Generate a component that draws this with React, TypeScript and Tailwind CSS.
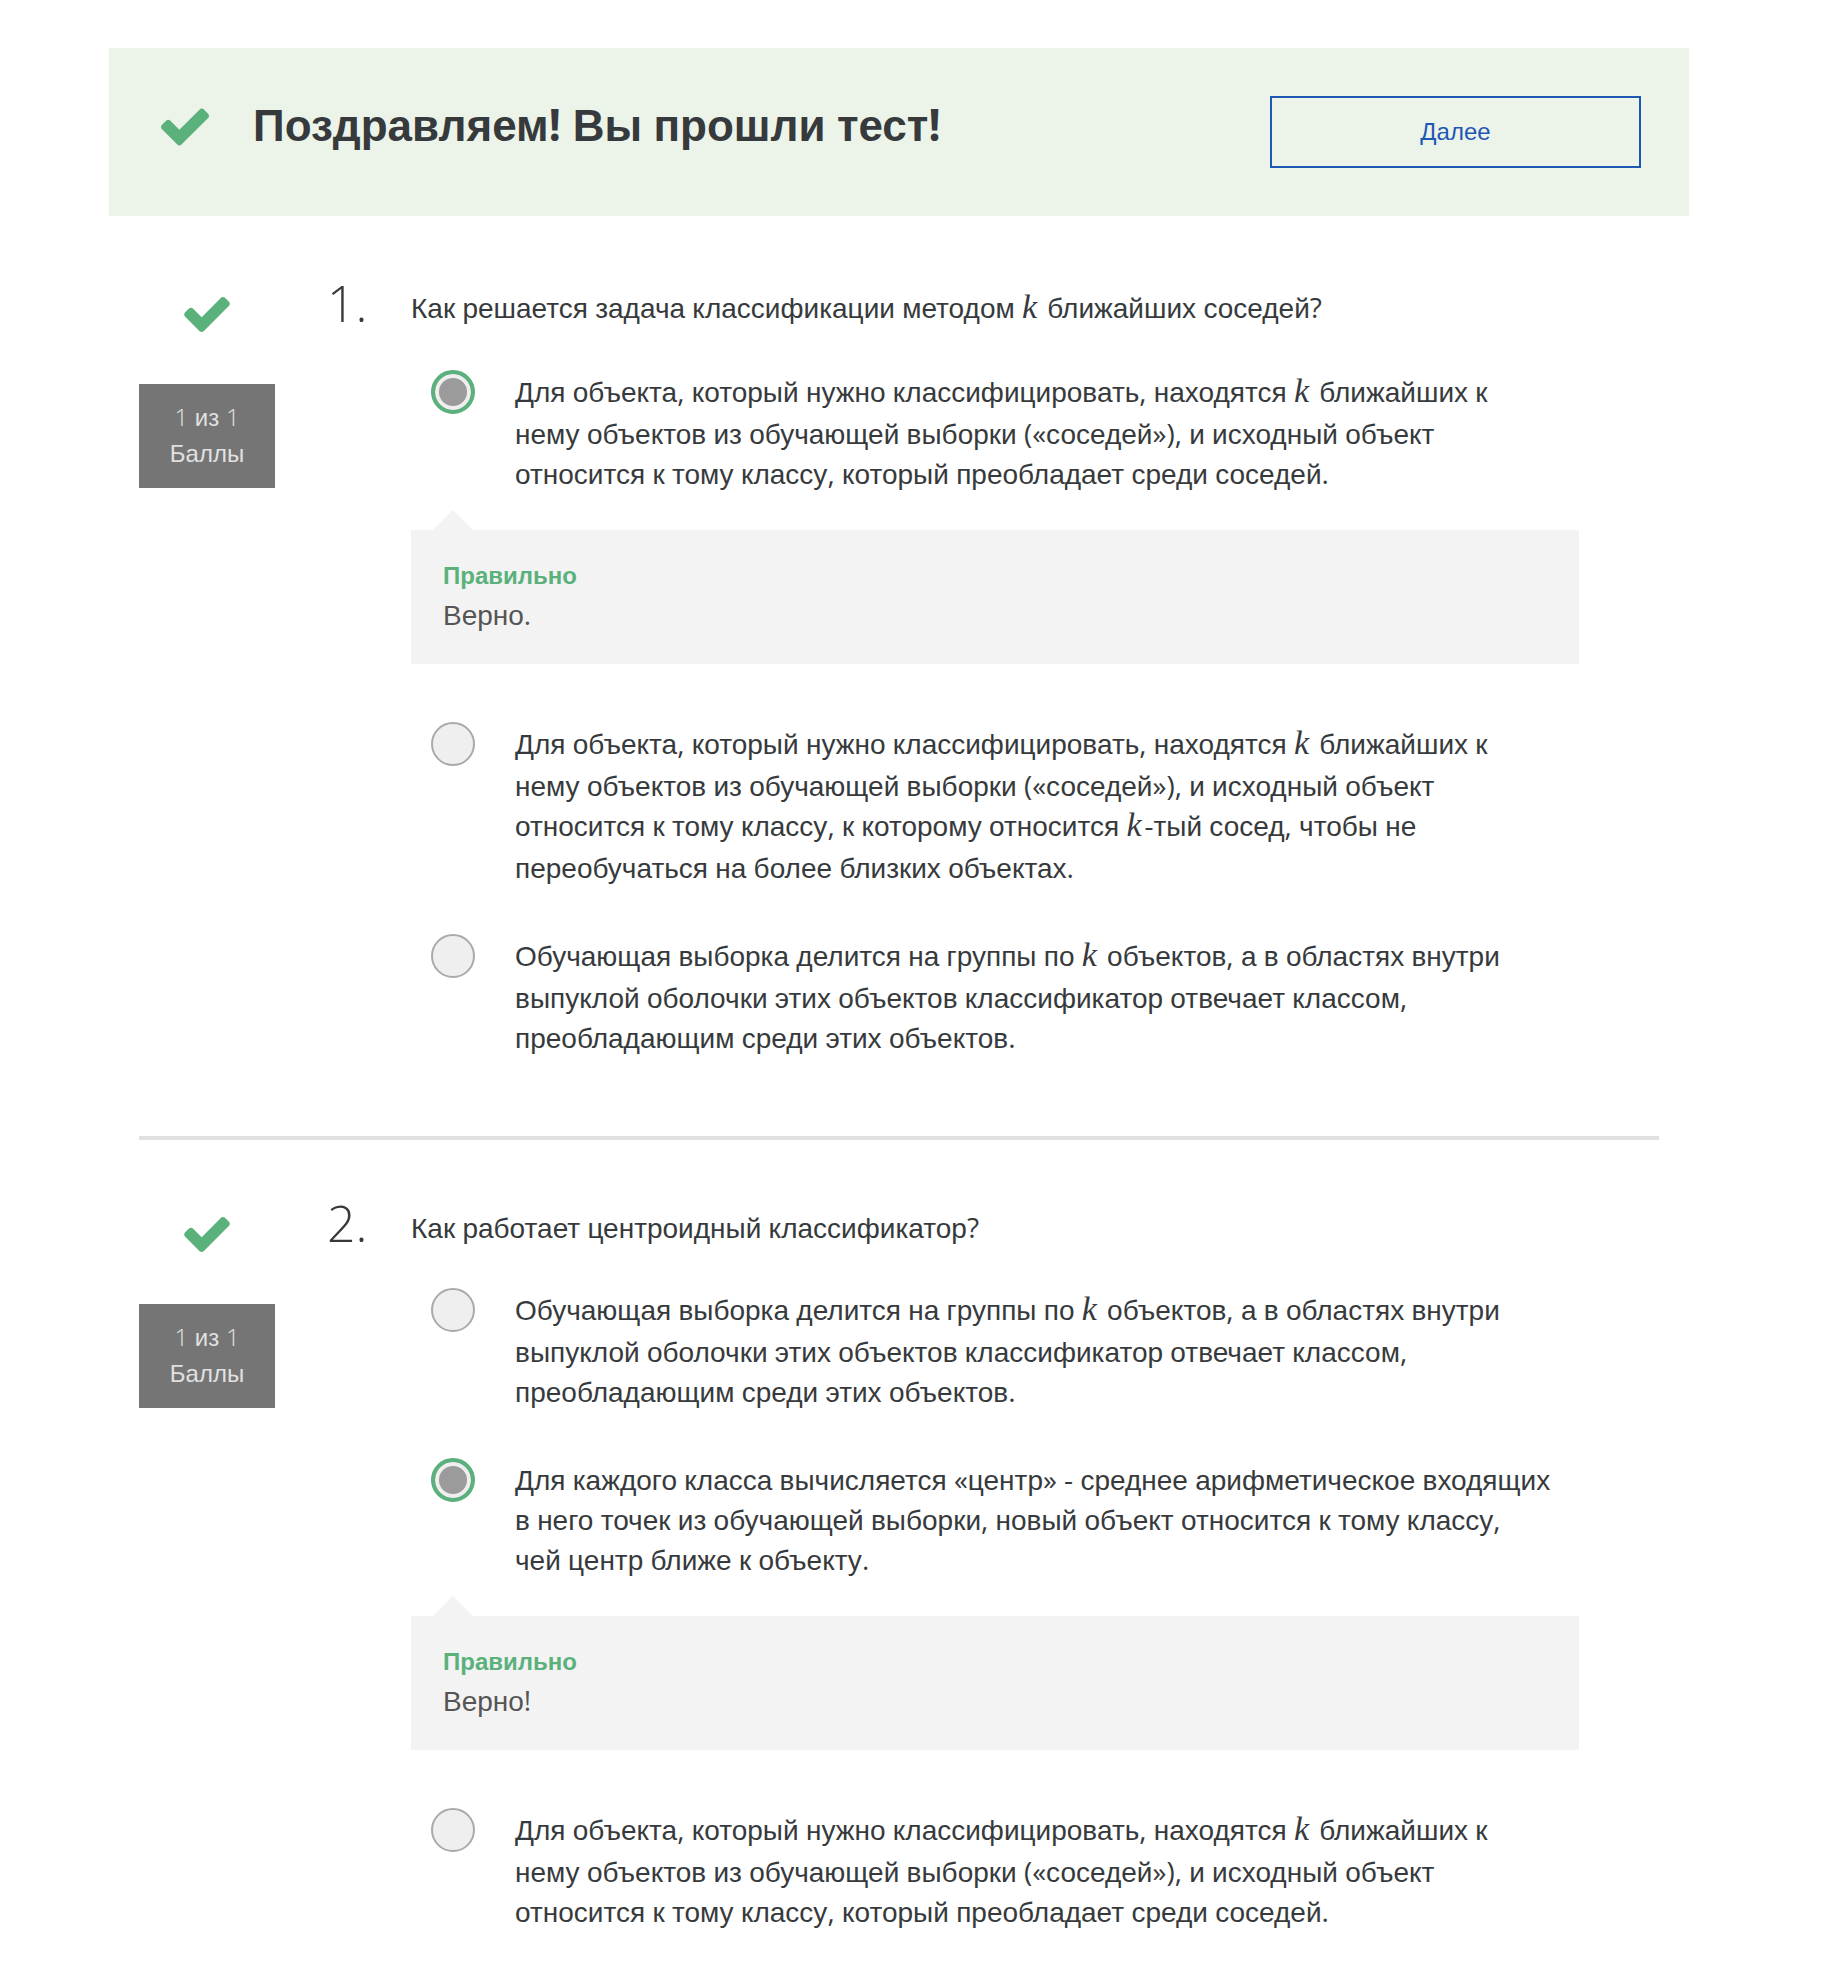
import { Fragment, type ReactNode } from "react";

const CYRILLIC = /([\u0400-\u04FF]+)/;

/** Open Sans for digits, spaces and punctuation; Liberation Sans for Cyrillic words. */
function Mixed({ children }: { children: string }) {
  return (
    <>
      {children.split(CYRILLIC).map((part, i) =>
        CYRILLIC.test(part) || part === "" ? (
          <Fragment key={i}>{part}</Fragment>
        ) : (
          <span key={i} className="font-['Open_Sans',sans-serif] leading-none">
            {part}
          </span>
        ),
      )}
    </>
  );
}

/** Text in which a $ stands for the variable k. */
function MathText({ children }: { children: string }) {
  return (
    <>
      {children.split("$").map((part, i) => (
        <Fragment key={i}>
          {i > 0 && (
            <i className="inline-block w-[18px] pb-[7px] font-['Liberation_Serif',serif] text-[34px] leading-[34px]">
              k
            </i>
          )}
          <Mixed>{part}</Mixed>
        </Fragment>
      ))}
    </>
  );
}

function Check({ className }: { className: string }) {
  return (
    <svg viewBox="121 334 1550 1188" className={className} fill="#5bb17b" aria-hidden="true">
      <path d="M1671 566q0 40-28 68l-724 724-136 136q-28 28-68 28t-68-28l-136-136-362-362q-28-28-28-68t28-68l136-136q28-28 68-28t68 28l294 295 656-657q28-28 68-28t68 28l136 136q28 28 28 68z" />
    </svg>
  );
}

function Feedback({ children }: { children: ReactNode }) {
  return (
    <div className="relative mt-[35px] mb-3 bg-[#f3f3f3] px-8 py-7">
      <svg viewBox="0 0 40 20" className="absolute -top-5 left-[22px] h-5 w-10" aria-hidden="true">
        <path d="M0 20 20 0 40 20z" fill="#f3f3f3" />
      </svg>
      <p className="text-2xl leading-9 font-bold text-[#5bb17b]">Правильно</p>
      <p className="mt-0.5 text-[28px] leading-10 text-[#555]">{children}</p>
    </div>
  );
}

type Option = { text: string; feedback?: string };

function Question({ number, title, options }: { number: number; title: string; options: Option[] }) {
  return (
    <section className="flex items-start">
      <div className="flex w-[136px] shrink-0 flex-col items-center pt-[9px]">
        <Check className="h-[35px] w-[46px]" />
        <p className="mt-[52px] w-full bg-[#757575] py-4 text-center text-2xl leading-9 text-[#e0e0e0]">
          <span className="font-['Open_Sans',sans-serif] leading-none font-light">1</span> из{" "}
          <span className="font-['Open_Sans',sans-serif] leading-none font-light">1</span>
          <br />
          Баллы
        </p>
      </div>
      <div className="w-[136px] shrink-0 pl-[52px] font-['Open_Sans',sans-serif] text-[50px] leading-[30px] font-light">
        {number}.
      </div>
      <div className="min-w-0 flex-1 pr-20">
        <h2 id={`question-${number}`} className="pt-px text-[28px] leading-10">
          <MathText>{title}</MathText>
        </h2>
        <div role="radiogroup" aria-labelledby={`question-${number}`} className="mt-[39px] flex flex-col gap-[45px]">
          {options.map((option, i) => (
            <div key={i} className={option.feedback ? "pb-px" : undefined}>
              <label className="flex items-start gap-10 pr-7 pl-5">
                <input
                  type="radio"
                  name={`answer-${number}`}
                  defaultChecked={option.feedback !== undefined}
                  className="size-11 shrink-0 appearance-none rounded-full border-2 border-[#aaa] bg-[#efefef] checked:border-4 checked:border-[#5bb17b] checked:bg-[#9b9b9b] checked:shadow-[inset_0_0_0_4px_#efefef]"
                />
                <span className="pt-[3px] text-[28px] leading-10">
                  <MathText>{option.text}</MathText>
                </span>
              </label>
              {option.feedback && (
                <Feedback>
                  <Mixed>{option.feedback}</Mixed>
                </Feedback>
              )}
            </div>
          ))}
        </div>
      </div>
    </section>
  );
}

const NEAREST =
  "Для объекта, который нужно классифицировать, находятся $ ближайших к нему объектов из обучающей выборки («соседей»), и исходный объект относится к тому классу, ";
const GROUPS =
  "Обучающая выборка делится на группы по $ объектов, а в областях внутри выпуклой оболочки этих объектов классификатор отвечает классом, преобладающим среди этих объектов.";

export default function App() {
  return (
    <main className="min-h-screen bg-white pt-12 pr-[133px] pb-12 pl-[109px] font-['Liberation_Sans',Arial,sans-serif] text-[#373a3c]">
      <header className="flex items-start bg-[#ecf4e9] p-12">
        <Check className="mt-3 ml-1 h-[38px] w-12 shrink-0" />
        <h1 className="ml-11 flex-1 text-[44px] leading-[60px] font-bold">
          <Mixed>Поздравляем! Вы прошли тест!</Mixed>
        </h1>
        <button type="button" className="h-[72px] w-[371px] border-2 border-[#1f57b5] text-2xl text-[#1f57b5]">
          Далее
        </button>
      </header>
      <div className="pt-[72px] pr-[30px] pl-[30px]">
        <Question
          number={1}
          title="Как решается задача классификации методом $ ближайших соседей?"
          options={[
            { text: NEAREST + "который преобладает среди соседей.", feedback: "Верно." },
            { text: NEAREST + "к которому относится $-тый сосед, чтобы не переобучаться на более близких объектах." },
            { text: GROUPS },
          ]}
        />
        <hr className="mt-[77px] mb-[68px] border-t-4 border-[#e1e1e1]" />
        <Question
          number={2}
          title="Как работает центроидный классификатор?"
          options={[
            { text: GROUPS },
            {
              text: "Для каждого класса вычисляется «центр» - среднее арифметическое входящих в него точек из обучающей выборки, новый объект относится к тому классу, чей центр ближе к объекту.",
              feedback: "Верно!",
            },
            { text: NEAREST + "который преобладает среди соседей." },
          ]}
        />
      </div>
    </main>
  );
}
